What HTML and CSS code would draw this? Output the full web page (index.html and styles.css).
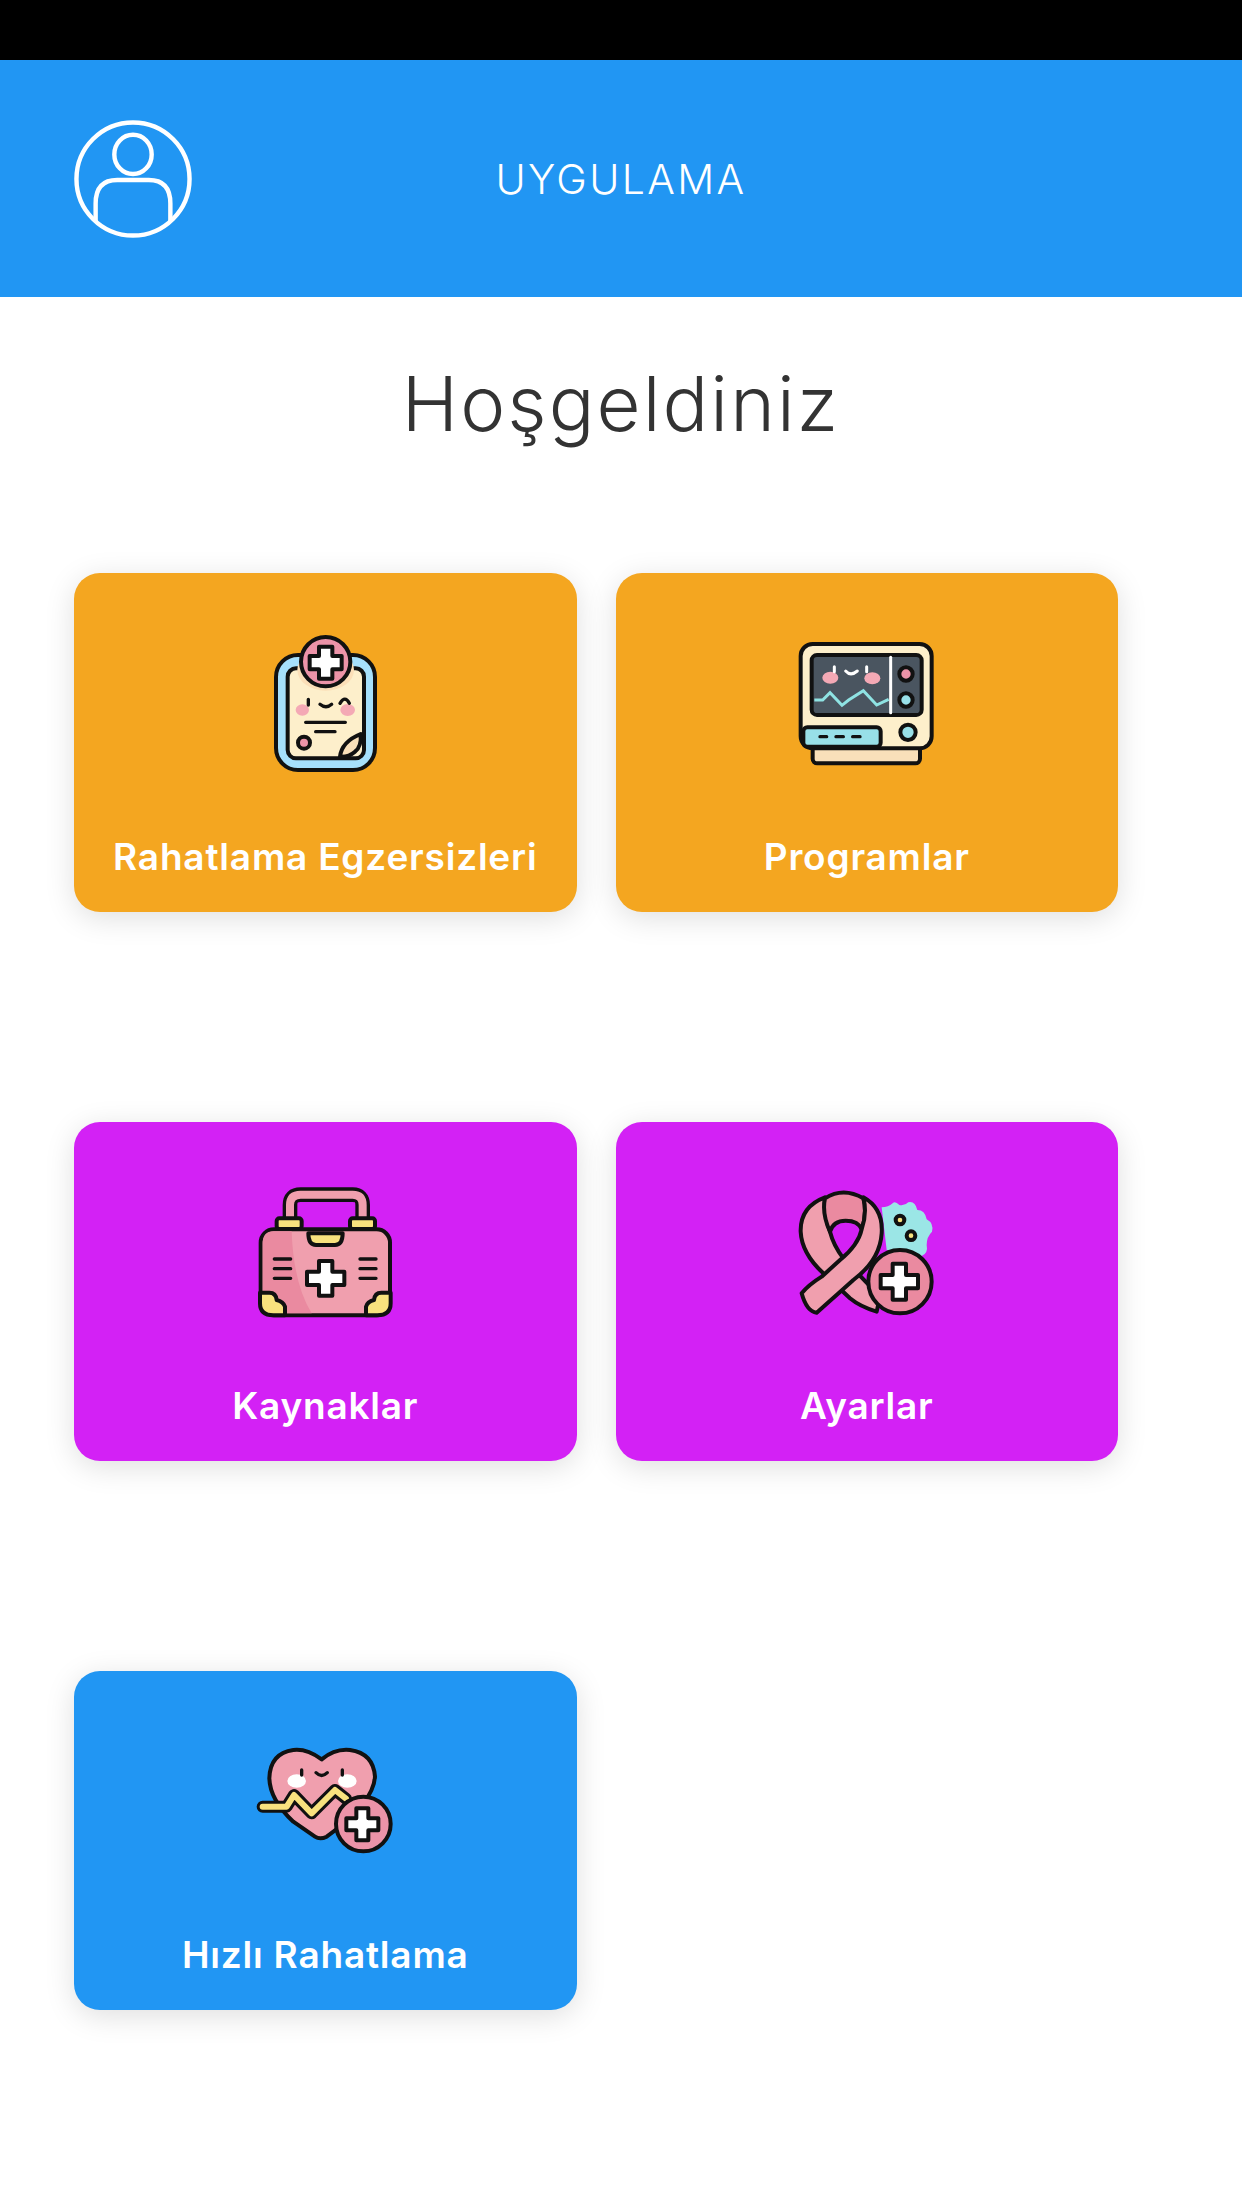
FILE: index.html
```html
<!DOCTYPE html>
<html lang="tr">
<head>
  <meta charset="UTF-8">
  <title>Uygulama</title>
  <link rel="stylesheet" href="styles.css">
</head>
<body>

  <div class="status-bar"></div>

  <header class="app-bar">
    <svg class="avatar" viewBox="0 0 120 120">
      <circle cx="60" cy="60" r="57.5" />
      <ellipse cx="60" cy="35" rx="19" ry="20" />
      <path d="M22 103V85Q22 61 44 61H76Q98 61 98 85V103" />
    </svg>
    <div class="app-title">UYGULAMA</div>
  </header>

  <h1 class="welcome">Hoşgeldiniz</h1>

  <div class="menu">

    <div class="tile tile-orange">
      <svg class="tile-icon" viewBox="0 0 510 510">
        <rect class="ink blue" x="108" y="135" width="297" height="345" rx="66" />
        <rect class="ink cream" x="143" y="175" width="229" height="270" rx="25" />
        <ellipse class="crescent" cx="257" cy="180" rx="85" ry="62" />
        <circle class="ink pink" cx="257" cy="155" r="74" />
        <path class="ink white" transform="translate(257 158)" d="M-20 -48H20V-20H48V20H20V48H-20V20H-48V-20H-20Z" />
        <ellipse class="blush" cx="187" cy="300" rx="20" ry="17" />
        <ellipse class="blush" cx="323" cy="300" rx="22" ry="18" />
        <path class="line" d="M205 268V285M240 283Q258 298 275 283M300 280Q315 255 328 280M197 337H316M227 365H285" />
        <circle class="ink pink" cx="192" cy="398" r="18" />
        <path class="ink peach" d="M300 440Q305 395 362 372Q365 410 345 425Q325 442 300 440Z" />
      </svg>
      <div class="tile-label">Rahatlama Egzersizleri</div>
    </div>

    <div class="tile tile-orange">
      <svg class="tile-icon" viewBox="6 -30 510 510">
        <rect class="ink peach" x="98" y="370" width="322" height="60" rx="14" />
        <rect class="ink cream" x="62" y="72" width="393" height="313" rx="36" />
        <rect class="ink slate" x="95" y="105" width="330" height="180" rx="16" />
        <path class="white-line" d="M332 112V278" />
        <circle class="ink pink" cx="378" cy="162" r="20" />
        <circle class="ink teal" cx="378" cy="240" r="20" />
        <ellipse class="blush" cx="151" cy="173" rx="24" ry="18" />
        <ellipse class="blush" cx="277" cy="175" rx="24" ry="18" />
        <path class="white-line" d="M163 140V155M260 140V155M197 153Q212 170 232 153" />
        <path class="wave" d="M103 240H128L150 218L186 256L206 240L250 212L290 255L326 238" />
        <rect class="ink teal" x="70" y="322" width="232" height="58" rx="12" />
        <path class="line" d="M120 350H140M168 350H190M218 350H240" />
        <circle class="ink teal" cx="384" cy="337" r="23" />
      </svg>
      <div class="tile-label">Programlar</div>
    </div>

    <div class="tile tile-purple">
      <svg class="tile-icon" viewBox="0 -33 510 510">
        <path class="handle-ink" d="M150 150V105Q150 74 182 74H338Q368 74 368 105V150" />
        <path class="handle-pink" d="M150 150V105Q150 74 182 74H338Q368 74 368 105V150" />
        <rect class="ink yellow" x="110" y="145" width="75" height="32" rx="8" />
        <rect class="ink yellow" x="330" y="145" width="75" height="32" rx="8" />
        <rect class="ink pink-light" x="62" y="178" width="388" height="258" rx="40" />
        <path class="shade" d="M68 220Q68 184 100 184H155Q160 340 215 430H100Q68 430 68 400Z" />
        <path class="ink yellow" d="M205 190H308Q308 225 285 225H228Q205 225 205 190Z" />
        <path class="line" d="M103 267H152M103 296H152M103 325H152M360 267H408M360 296H408M360 325H408" />
        <path class="ink white" transform="translate(257 325)" d="M-20 -52H20V-20H56V20H20V52H-20V20H-56V-20H-20Z" />
        <path class="ink yellow" d="M60 368H88Q108 368 110 390Q130 395 135 410V436H100Q60 436 60 400Z" />
        <path class="ink yellow" d="M452 368H424Q404 368 402 390Q382 395 378 410V436H412Q452 436 452 400Z" />
      </svg>
      <div class="tile-label">Kaynaklar</div>
    </div>

    <div class="tile tile-purple">
      <svg class="tile-icon" viewBox="6 -33 510 510">
        <path class="germ" d="M305 112Q325 112 338 100Q345 92 358 105Q375 108 385 97Q405 92 412 120Q435 120 440 148Q462 160 456 185Q440 200 440 225Q445 250 425 258L320 240Z" />
        <circle class="ink yellow" cx="360" cy="150" r="13" />
        <circle class="ink yellow" cx="393" cy="197" r="13" />
        <path class="ink pink-light" d="M135 82Q60 110 62 185Q65 250 130 310L210 385Q240 410 290 425L300 380L190 265Q160 225 150 185Q130 130 135 82Z" />
        <path class="ink pink-dark" d="M135 85Q190 50 250 85Q262 130 245 178Q235 152 197 152Q160 152 150 185Q125 130 135 85Z" />
        <path class="ink pink-light" d="M250 82Q310 115 305 190Q300 270 220 330Q170 375 110 428Q80 425 65 370Q85 345 125 320L180 270Q235 225 245 178Q262 130 250 82Z" />
        <circle class="ink pink-dark" cx="360" cy="335" r="95" />
        <path class="ink white" transform="translate(358 335)" d="M-20 -54H20V-20H56V20H20V54H-20V20H-56V-20H-20Z" />
      </svg>
      <div class="tile-label">Ayarlar</div>
    </div>

    <div class="tile tile-blue">
      <svg class="tile-icon" viewBox="0 -36 510 510">
        <path class="ink pink-light" d="M245 118Q200 85 160 90Q90 100 88 175Q90 240 160 305L225 350Q240 360 260 350Q400 250 405 170Q400 100 330 90Q285 85 245 118Z" />
        <ellipse class="white" cx="170" cy="183" rx="28" ry="20" />
        <ellipse class="white" cx="322" cy="183" rx="28" ry="20" />
        <path class="line" d="M185 150V165M307 150V165M228 158Q245 175 262 158" />
        <path class="zig-ink" d="M68 260H140L162 225L215 280L285 210L318 236" />
        <path class="zig-yellow" d="M68 260H140L162 225L215 280L285 210L318 236" />
        <circle class="ink pink" cx="370" cy="312" r="82" />
        <path class="ink white" transform="translate(367 313)" d="M-18 -48H18V-18H48V18H18V48H-18V18H-48V-18H-18Z" />
      </svg>
      <div class="tile-label">Hızlı Rahatlama</div>
    </div>

  </div>

</body>
</html>
```

FILE: styles.css
```css
body {
  margin: 0;
  height: 2208px;
  overflow: hidden;
  background: #fff;
  font-family: Inter, "Open Sans", sans-serif;
  color: #333;
}

.status-bar {
  height: 60px;
  background: #000;
}

.app-bar {
  display: grid;
  grid-template-columns: 1fr auto 1fr;
  align-items: center;
  height: 237px;
  padding: 0 74px;
  background: #2196f3;
}

.avatar {
  width: 118px;
  height: 118px;
  fill: none;
  stroke: #fff;
  stroke-width: 4.5;
}

.app-title {
  color: #fff;
  font-size: 41px;
  font-weight: 300;
  letter-spacing: 2.4px;
}

.welcome {
  margin: 61px 0 0;
  font-size: 76px;
  line-height: 90px;
  font-weight: 300;
  letter-spacing: 2.1px;
  text-align: center;
}

.menu {
  display: grid;
  grid-template-columns: 502.5px 502.5px;
  column-gap: 39px;
  row-gap: 210px;
  margin-top: 125px;
  padding-left: 74px;
}

.tile {
  display: flex;
  flex-direction: column;
  align-items: center;
  box-sizing: border-box;
  height: 339px;
  padding-top: 37px;
  border-radius: 26px;
  box-shadow: 0 6px 30px rgba(0, 0, 0, 0.13);
}

.tile-orange { background: #f4a620; }
.tile-purple { background: #d321f5; }
.tile-blue { background: #2196f3; }

.tile-icon {
  flex: none;
  width: 170px;
  height: 170px;
  filter: blur(0.5px);
}

.tile-label {
  margin-top: 57px;
  color: #fff;
  font-size: 37px;
  line-height: 40px;
  font-weight: 600;
  letter-spacing: 0.8px;
  white-space: nowrap;
}

/* icon paint */
.ink { stroke: #111; stroke-width: 12; stroke-linejoin: round; }
.line { fill: none; stroke: #111; stroke-width: 10; stroke-linecap: round; }
.white-line { fill: none; stroke: #fff; stroke-width: 9; stroke-linecap: round; }
.white { fill: #fff; }
.blue { fill: #a6e0fc; }
.cream { fill: #fdefcb; }
.peach { fill: #f9e0ba; }
.pink { fill: #ec93a8; }
.pink-light { fill: #f09fae; }
.pink-dark { fill: #ea8aa0; }
.blush { fill: #f4a9b5; }
.crescent { fill: #fbdfb8; }
.slate { fill: #4a5560; }
.teal { fill: #98e0e8; }
.yellow { fill: #f8e27e; }
.germ { fill: #9be6e6; }
.shade { fill: #ea8aa0; }
.wave { fill: none; stroke: #8fe3e3; stroke-width: 9; }
.handle-ink { fill: none; stroke: #111; stroke-width: 44; }
.handle-pink { fill: none; stroke: #f09fae; stroke-width: 24; }
.zig-ink { fill: none; stroke: #111; stroke-width: 36; stroke-linecap: round; stroke-linejoin: round; }
.zig-yellow { fill: none; stroke: #f8e27e; stroke-width: 18; stroke-linecap: round; stroke-linejoin: round; }
```
